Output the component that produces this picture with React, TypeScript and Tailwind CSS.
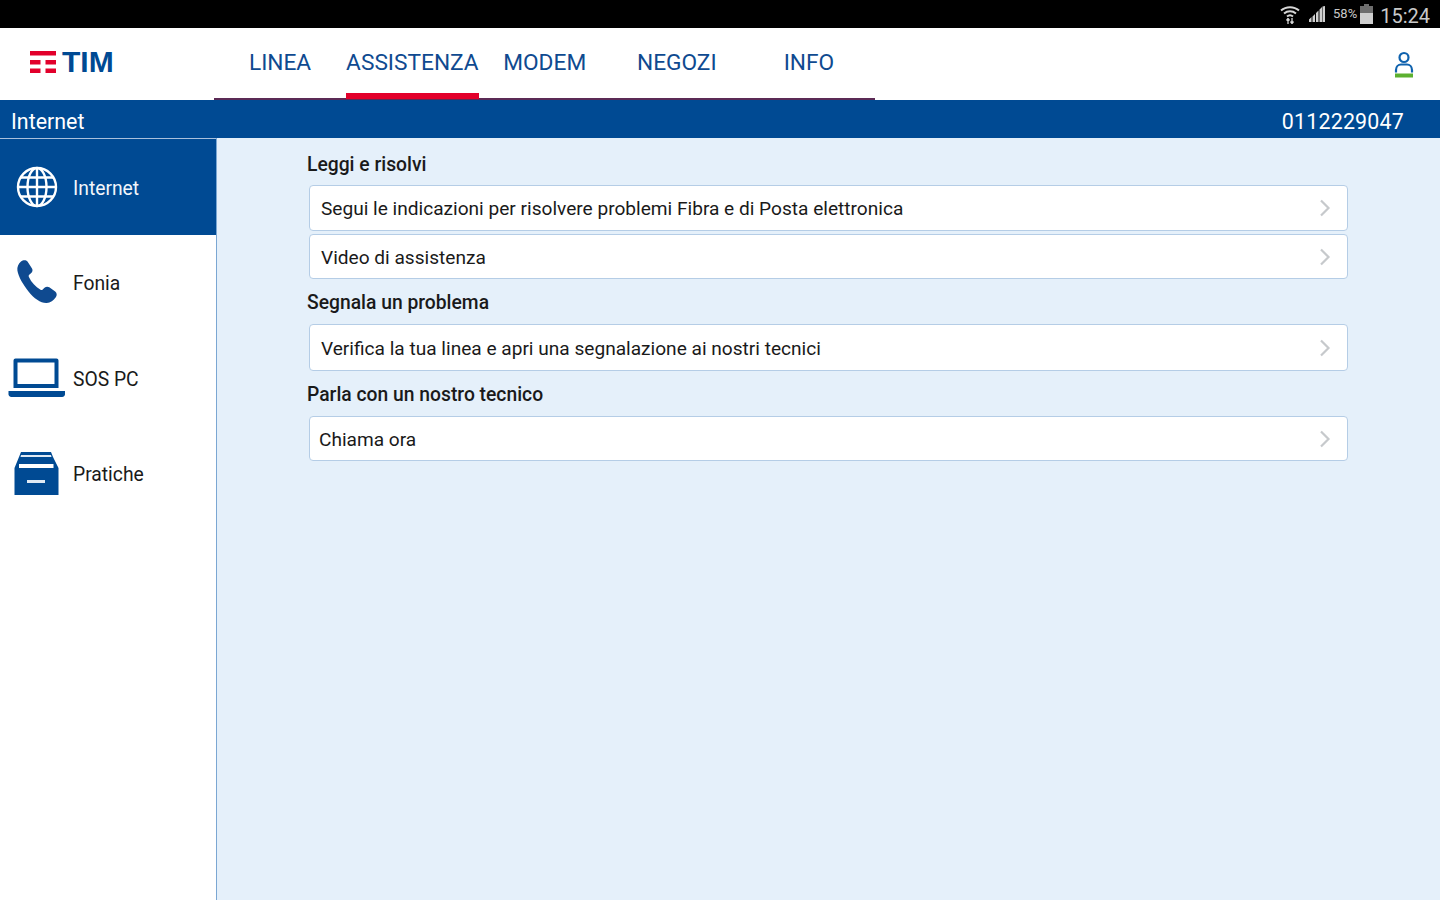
const rb = "font-['Roboto',sans-serif]";

function Globe() {
  return (
    <svg width="42" height="42" viewBox="0 0 42 42" fill="none" stroke="#fff" strokeWidth="2.4">
      <circle cx="21" cy="21" r="19" />
      <ellipse cx="21" cy="21" rx="9.5" ry="19" />
      <path d="M21 2v38M2 21h38M5 11.5h32M5 30.5h32" />
    </svg>
  );
}
function Phone() {
  return (
    <svg width="42" height="46" viewBox="0 0 42 46">
      <path
        fill="#0f4a90"
        d="M5 2.500C7 .8 10 .6 11.500 2.500L16 9.500C17 11.300 16.500 13 15 14.300L13.200 15.800C12.600 16.400 12.500 17.200 12.900 18C15.500 23.500 19.500 27.700 24.500 30.800C25.300 31.300 26.100 31.200 26.700 30.600L28.500 28.800C29.900 27.500 31.700 27.200 33.300 28.300L39.200 32.600C41 34 41.200 36.500 39.800 38.300C37.500 41.400 34.500 43.800 30.700 44C25 44.300 18 39.500 12.500 32.500C7 25.500 2.300 17.500 1.400 11.500C.9 8 2.500 4.700 5 2.500Z"
      />
    </svg>
  );
}
function Laptop() {
  return (
    <svg width="58" height="40" viewBox="0 0 58 40">
      <path fill="#004a93" fillRule="evenodd" d="M7.500 .5h41a2 2 0 0 1 2 2v27.500h-45V2.500a2 2 0 0 1 2-2ZM9.500 4.500V26h37V4.500Z" />
      <path fill="#004a93" d="M.5 33h56.500v2.500a3 3 0 0 1-3 3.500H3.500a3 3 0 0 1-3-3.500Z" />
    </svg>
  );
}
function Drawer() {
  return (
    <svg width="46" height="44" viewBox="0 0 46 44">
      <path fill="#004a93" d="M7 1h30l2 5 5.500 11v27H.5V17L5 6Z" />
      <path fill="#dfe9f4" d="M7 4h30l.5 2H6.500Z" />
      <path fill="#fff" d="M5 13h34.500v4H5Z" />
      <path fill="#dfe9f4" d="M13 29h18v3H13Z" />
    </svg>
  );
}
function Chevron() {
  return (
    <svg width="12" height="18" viewBox="0 0 12 18" fill="none" stroke="#c6c9cc" strokeWidth="2.200">
      <path d="M2 1.500 9.500 9 2 16.500" />
    </svg>
  );
}
function User() {
  return (
    <svg width="20" height="27" viewBox="0 0 20 27">
      <circle cx="10" cy="6.500" r="4.500" fill="none" stroke="#0f62ae" strokeWidth="2.200" />
      <path d="M2 21.500v-2.500C2 15.500 4.500 13.500 7 13.500h6c2.500 0 5 2 5 5.500v2.500" fill="none" stroke="#0f62ae" strokeWidth="2.200" />
      <rect x="1" y="22.500" width="18" height="4" fill="#5cb030" />
    </svg>
  );
}
function Logo() {
  return (
    <div className="flex items-center gap-[6px]">
      <svg width="26" height="22" viewBox="0 0 26 22" fill="#e2002b">
        <path d="M0 0h26v4.500H0ZM0 9h10.500v4.500H0ZM15.500 9H26v4.500H15.500ZM0 17.500h10.500V22H0ZM15.500 17.500H26V22H15.500Z" />
      </svg>
      <span className="font-['Liberation_Sans',sans-serif] font-bold text-[30px] leading-[22px] text-[#004a93]">TIM</span>
    </div>
  );
}
function StatusBar() {
  return (
    <div className={`h-7 bg-black flex items-center justify-end pr-[10px] text-[#c9c9c9] ${rb}`}>
      <svg width="20" height="20" viewBox="0 0 20 20" fill="none" stroke="#d6d6d6" strokeWidth="2" className="mr-[9px] ml-[1px]">
        <path d="M1 6.500c5-4.500 13-4.500 18 0M4 9.500c3.500-3 8.500-3 12 0M7 12.500c1.800-1.500 4.200-1.500 6 0" />
        <path d="M8 20v-5M8 14.500l-1.500 2M8 14.500l1.500 2M12 14v5.500M12 19.500l-1.500-2M12 19.500l1.500-2" strokeWidth="1.300" />
      </svg>
      <svg width="16" height="16" viewBox="0 0 16 16" fill="#cfcfcf" className="mr-[8px]">
        <path d="M0 13.500 2.500 11v5H0ZM3.500 10.500 6 8v8H3.500ZM7 7l2.500-2.500V16H7ZM10.500 3.500 13 1v15h-2.500ZM13.500.5 16 0v16h-2.500Z" />
      </svg>
      <span className="text-[13px] mr-[3px]">58%</span>
      <svg width="13" height="20" viewBox="0 0 13 20" className="mr-[7px]">
        <path fill="#6e6e6e" d="M4 0h5v2h4v8H0V2h4Z" />
        <rect y="9" width="13" height="11" fill="#cfcfcf" />
      </svg>
      <span className="text-[20px] leading-none pt-[3px]">15:24</span>
    </div>
  );
}
const tabs = ["LINEA", "ASSISTENZA", "MODEM", "NEGOZI", "INFO"];
function Header() {
  return (
    <div className="h-[72px] bg-white flex items-stretch relative">
      <div className="w-[214px] pl-[30px] flex items-center pb-[4px] shrink-0">
        <Logo />
      </div>
      <div className="w-[661px] flex border-b-2 border-[#5b2a55] h-[72px]">
        {tabs.map((t, i) => (
          <div key={t} className="flex-1 flex justify-center">
            <div className={`h-full flex items-center text-[22.7px] text-[#0f4a90] ${rb} ${i === 1 ? "relative" : ""}`}>
              {t}
              {i === 1 && <div className="absolute left-0 right-0 bottom-[-1px] h-[6px] bg-[#e2002b]" />}
            </div>
          </div>
        ))}
      </div>
      <div className="flex-1 flex justify-end items-center pr-[26px]">
        <User />
      </div>
    </div>
  );
}
const side = [
  { label: "Internet", icon: <Globe />, active: true },
  { label: "Fonia", icon: <Phone /> },
  { label: "SOS PC", icon: <Laptop /> },
  { label: "Pratiche", icon: <Drawer /> },
];
function Sidebar() {
  return (
    <div className="w-[217px] shrink-0 bg-white border-r border-[#7ba7d3]">
      <div className="h-px bg-[#a9c0dc]" />
      {side.map((s) => (
        <div key={s.label} className={`h-[95.500px] flex items-center text-[19.3px] ${rb} ${s.active ? "bg-[#004a93] text-[#f2f6fb]" : "text-[#1a1a1a]"}`}>
          <div className="w-[73px] flex justify-center shrink-0">{s.icon}</div>
          <span className="pt-[5px]">{s.label}</span>
        </div>
      ))}
    </div>
  );
}
function Row({ text, h, px = "pl-[11px]" }: { text: string; h: string; px?: string }) {
  return (
    <div className={`${h} ${px} pr-[16px] ml-[2px] w-[1039px] bg-white border border-[#b5cde6] rounded-[4px] flex items-center justify-between text-[19.1px] text-[#1a1a1a]`}>
      <span className="pt-[3px]">{text}</span>
      <Chevron />
    </div>
  );
}
function Heading({ children, cls }: { children: string; cls: string }) {
  return <div className={`${cls} text-[19.3px] leading-[24px] font-medium text-[#1a1a1a]`}>{children}</div>;
}
function Content() {
  return (
    <div className={`flex-1 bg-[#e5f0fa] pl-[90px] pt-[15px] ${rb}`}>
      <Heading cls="mb-[8px]">Leggi e risolvi</Heading>
      <Row text="Segui le indicazioni per risolvere problemi Fibra e di Posta elettronica" h="h-[46px]" />
      <div className="h-[3px]" />
      <Row text="Video di assistenza" h="h-[45px]" />
      <Heading cls="mt-[12px] mb-[9px]">Segnala un problema</Heading>
      <Row text="Verifica la tua linea e apri una segnalazione ai nostri tecnici" h="h-[47px]" />
      <Heading cls="mt-[12px] mb-[9px]">Parla con un nostro tecnico</Heading>
      <Row text="Chiama ora" h="h-[45px]" px="pl-[9px]" />
    </div>
  );
}
export default function App() {
  return (
    <div className="w-[1440px] h-[900px] flex flex-col overflow-hidden">
      <StatusBar />
      <Header />
      <div className={`h-[38px] bg-[#004a93] flex items-center justify-between pl-[11px] pr-[36px] pt-[7px] text-white text-[21.4px] shrink-0 ${rb}`}>
        <span>Internet</span>
        <span className="tracking-[0.2px]">0112229047</span>
      </div>
      <div className="flex-1 flex min-h-0">
        <Sidebar />
        <Content />
      </div>
    </div>
  );
}
